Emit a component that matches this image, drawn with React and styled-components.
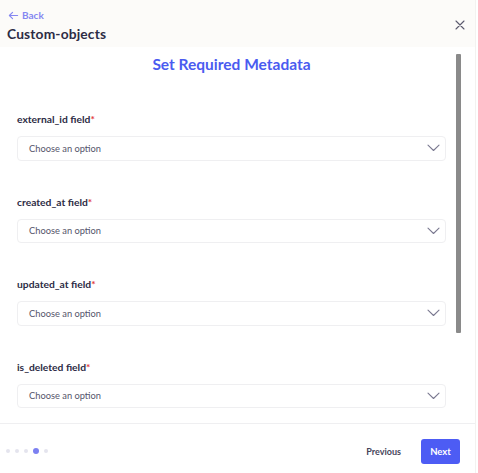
import React from "react";
import styled, { createGlobalStyle } from "styled-components";

const Global = createGlobalStyle`
  html, body { margin: 0; padding: 0; background: #ffffff; }
  body { font-family: "Lato", "Noto Sans", sans-serif; }
  * { box-sizing: border-box; }
`;

const Modal = styled.div`
  width: 476px;
  height: 473px;
  display: flex;
  flex-direction: column;
  background: #ffffff;
  border-right: 1px solid #f3f2f0;
`;

const Header = styled.header`
  height: 47px;
  flex: none;
  background: #fcfbf9;
  padding: 9px 10px 0 7px;
  display: flex;
  justify-content: space-between;
  align-items: flex-start;
`;

const HeaderLeft = styled.div`
  display: flex;
  flex-direction: column;
  gap: 5px;
`;

const BackLink = styled.a`
  display: flex;
  align-items: center;
  gap: 3px;
  padding-left: 1px;
  color: #8587f1;
  font-size: 10px;
  font-weight: 700;
  cursor: pointer;
  line-height: 12px;
`;

const Title = styled.h1`
  margin: 0;
  font-size: 13.8px;
  font-weight: 700;
  color: #2d2c45;
  letter-spacing: 0.15px;
  line-height: 16px;
`;

const CloseButton = styled.button`
  border: none;
  background: none;
  padding: 0;
  margin-top: 11px;
  display: flex;
`;

const Body = styled.div`
  flex: 1;
  min-height: 0;
  display: flex;
`;

const Scroll = styled.div`
  width: 455px;
  overflow: hidden;
`;

const ScrollTrack = styled.div`
  width: 8px;
  padding: 7px 2px 0 1px;
`;

const ScrollThumb = styled.div`
  height: 279px;
  background: #8a8a8a;
  border-radius: 1px;
`;

const Content = styled.div`
  padding: 7px 0 0 17px;
  display: flex;
  flex-direction: column;
`;

const Heading = styled.h2`
  margin: 0 9px 38px 0;
  text-align: center;
  font-size: 15.5px;
  font-weight: 700;
  color: #4a5bf0;
  line-height: 20px;
`;

const Field = styled.div`
  display: flex;
  flex-direction: column;
  gap: 10px;
  margin-bottom: 34px;
`;

const Label = styled.label`
  font-size: 10.3px;
  font-weight: 700;
  color: #2d2c45;
  line-height: 14px;
`;

const Req = styled.span`
  color: #e23a3a;
`;

const Select = styled.div`
  width: 429px;
  height: 24.5px;
  border: 1px solid #efeff1;
  border-radius: 4px;
  display: flex;
  align-items: center;
  justify-content: space-between;
  padding: 0 5px 0 11px;
  font-size: 9.3px;
  color: #55546a;
  background: #fff;
`;

const Footer = styled.footer`
  height: 50px;
  flex: none;
  border-top: 1px solid #efeff1;
  display: flex;
  align-items: center;
  justify-content: space-between;
  padding: 5px 15px 0 6px;
`;

const Dots = styled.div`
  display: flex;
  align-items: center;
  gap: 5px;
`;

const Dot = styled.span`
  width: ${(p) => (p.$active ? 6 : 4)}px;
  height: ${(p) => (p.$active ? 6 : 4)}px;
  border-radius: 50%;
  background: ${(p) => (p.$active ? "#7c80f1" : "#e4e4ee")};
`;

const Actions = styled.div`
  display: flex;
  align-items: center;
  gap: 20px;
`;

const PrevButton = styled.button`
  border: none;
  background: none;
  font-family: inherit;
  font-size: 9px;
  font-weight: 700;
  color: #46455a;
  padding: 0;
`;

const NextButton = styled.button`
  border: none;
  background: #4d5cf4;
  color: #fff;
  font-family: inherit;
  font-size: 9.5px;
  font-weight: 700;
  width: 39px;
  height: 25px;
  border-radius: 3px;
  padding: 0;
`;

const fields = ["external_id", "created_at", "updated_at", "is_deleted"];

const Chevron = () => (
  <svg width="13" height="8" viewBox="0 0 13 8" fill="none" stroke="#7a7990" strokeWidth="1.1" strokeLinecap="round" strokeLinejoin="round">
    <path d="M1 1.2l5.5 5.3 5.5-5.3" />
  </svg>
);

export default function App() {
  return (
    <>
      <Global />
      <Modal>
        <Header>
          <HeaderLeft>
            <BackLink>
              <svg width="11" height="11" viewBox="0 0 24 24" fill="none" stroke="#8587f1" strokeWidth="2.4" strokeLinecap="round" strokeLinejoin="round">
                <path d="M21 12H3M10 5l-7 7 7 7" />
              </svg>
              Back
            </BackLink>
            <Title>Custom-objects</Title>
          </HeaderLeft>
          <CloseButton aria-label="Close">
            <svg width="10" height="10" viewBox="0 0 10 10" fill="none" stroke="#5b5a6e" strokeWidth="1.1" strokeLinecap="round">
              <path d="M1 1l8 8M9 1L1 9" />
            </svg>
          </CloseButton>
        </Header>
        <Body>
          <Scroll>
            <Content>
              <Heading>Set Required Metadata</Heading>
              {fields.map((f) => (
                <Field key={f}>
                  <Label>
                    {f} field<Req>*</Req>
                  </Label>
                  <Select>
                    Choose an option
                    <Chevron />
                  </Select>
                </Field>
              ))}
            </Content>
          </Scroll>
          <ScrollTrack>
            <ScrollThumb />
          </ScrollTrack>
        </Body>
        <Footer>
          <Dots>
            <Dot />
            <Dot />
            <Dot />
            <Dot $active />
            <Dot />
          </Dots>
          <Actions>
            <PrevButton>Previous</PrevButton>
            <NextButton>Next</NextButton>
          </Actions>
        </Footer>
      </Modal>
    </>
  );
}
